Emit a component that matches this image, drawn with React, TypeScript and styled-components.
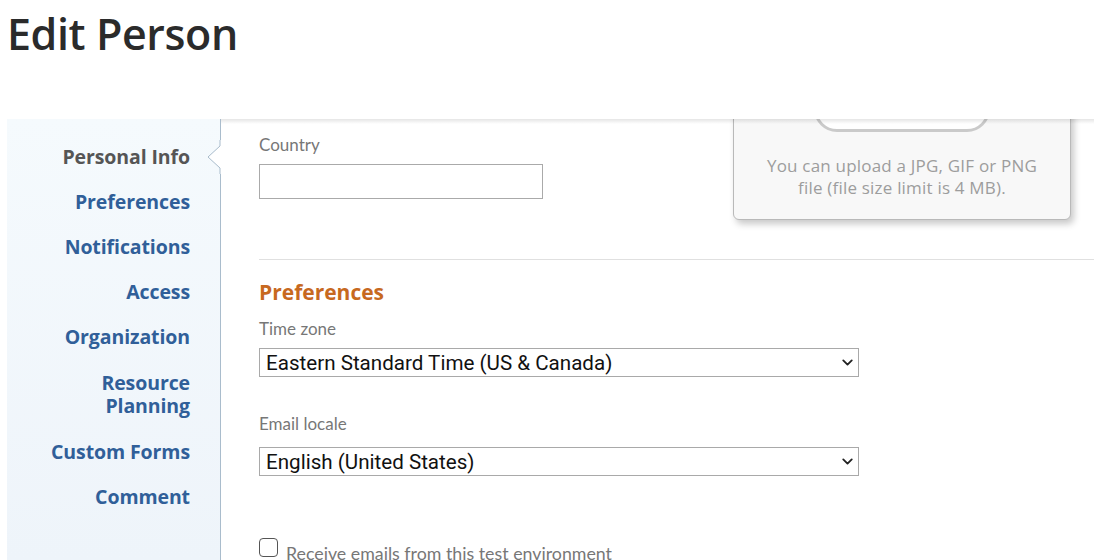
import React from "react";
import styled, { createGlobalStyle } from "styled-components";
import { ChevronDown } from "lucide-react";

const GlobalStyle = createGlobalStyle`
  html, body {
    margin: 0;
    padding: 0;
    background: #ffffff;
    overflow: hidden;
  }
  * {
    box-sizing: border-box;
  }
`;

const navItems = [
  "Personal Info",
  "Preferences",
  "Notifications",
  "Access",
  "Organization",
  "Resource Planning",
  "Custom Forms",
  "Comment",
];

const App: React.FC = () => {
  return (
    <>
      <GlobalStyle />
      <Page>
        <Header>
          <Title>Edit Person</Title>
        </Header>
        <Body>
          <Sidebar>
            <NavList>
              {navItems.map((item, index) => {
                const multiline = item === "Resource Planning";
                return (
                  <NavItem key={item} active={index === 0} multiline={multiline}>
                    {multiline ? (
                      <>
                        Resource
                        <br />
                        Planning
                      </>
                    ) : (
                      item
                    )}
                    {index === 0 && (
                      <Notch width="14" height="34" viewBox="0 0 14 34">
                        <path d="M14 0 L14 34 L13 34 L13 28 L1 17 L13 6 L13 0 Z" fill="#ffffff" />
                        <path d="M13 0 L13 6 L1 17 L13 28 L13 34" fill="none" stroke="#a9bccc" strokeWidth="1" />
                      </Notch>
                    )}
                  </NavItem>
                );
              })}
            </NavList>
          </Sidebar>

          <Content>
            <TopRow>
              <FieldColumn>
                <Label>Country</Label>
                <TextInput type="text" />
              </FieldColumn>
              <AvatarCard>
                <UploadButton type="button">Upload photo</UploadButton>
                <CardNote>
                  You can upload a JPG, GIF or PNG
                  <br />
                  file (file size limit is 4 MB).
                </CardNote>
              </AvatarCard>
            </TopRow>

            <Divider />

            <SectionTitle>Preferences</SectionTitle>

            <Label>Time zone</Label>
            <SelectWrap>
              <Select defaultValue="est">
                <option value="est">Eastern Standard Time (US &amp; Canada)</option>
              </Select>
              <SelectArrow size={17} strokeWidth={2.6} />
            </SelectWrap>

            <Label spaced>Email locale</Label>
            <SelectWrap>
              <Select defaultValue="en-us">
                <option value="en-us">English (United States)</option>
              </Select>
              <SelectArrow size={17} strokeWidth={2.6} />
            </SelectWrap>

            <CheckRow>
              <Checkbox type="checkbox" />
              <CheckLabel>Receive emails from this test environment</CheckLabel>
            </CheckRow>
          </Content>
        </Body>
      </Page>
    </>
  );
};

export default App;

const Page = styled.div`
  width: 1094px;
  height: 560px;
  display: flex;
  flex-direction: column;
  overflow: hidden;
`;

const Header = styled.header`
  height: 119px;
  padding: 5px 0 0 7px;
`;

const Title = styled.h1`
  margin: 0;
  font-family: "Open Sans", "Noto Sans", sans-serif;
  font-weight: 600;
  font-size: 43px;
  line-height: 58px;
  color: #2b2b2b;
  letter-spacing: -0.4px;
`;

const Body = styled.div`
  flex: 1;
  display: flex;
  padding-left: 7px;
  min-height: 0;
`;

const Sidebar = styled.nav`
  width: 214px;
  flex-shrink: 0;
  background: linear-gradient(180deg, #f5fafd 0%, #eef4fa 100%);
  border-right: 1px solid #a9bccc;
  position: relative;
`;

const NavList = styled.ul`
  list-style: none;
  margin: 0;
  padding: 26px 30px 0 0;
  display: flex;
  flex-direction: column;
  align-items: flex-end;
  gap: 22px;
`;

const NavItem = styled.li<{ active?: boolean; multiline?: boolean }>`
  position: relative;
  width: 100%;
  text-align: right;
  padding: ${({ multiline }) => (multiline ? "1px 0" : "0")};
  font-family: "Open Sans", "Lato", sans-serif;
  font-weight: 700;
  font-size: 19.5px;
  line-height: 23px;
  letter-spacing: -0.1px;
  color: ${({ active }) => (active ? "#555555" : "#305f99")};
  cursor: pointer;
`;

const Notch = styled.svg`
  position: absolute;
  right: -31px;
  top: 50%;
  transform: translateY(-50%);
`;

const Content = styled.main`
  position: relative;
  flex: 1;
  overflow: hidden;
  padding: 16px 0 0 38px;

  &::before {
    content: "";
    position: absolute;
    top: 0;
    left: 0;
    right: 0;
    height: 5px;
    background: linear-gradient(180deg, rgba(0, 0, 0, 0.1), rgba(0, 0, 0, 0));
    z-index: 2;
  }
`;

const TopRow = styled.div`
  display: flex;
  align-items: flex-start;
`;

const FieldColumn = styled.div`
  width: 474px;
  display: flex;
  flex-direction: column;
`;

const Label = styled.label<{ spaced?: boolean }>`
  display: block;
  font-family: "Lato", "Open Sans", sans-serif;
  font-size: 17px;
  line-height: 20px;
  color: #777777;
  margin: ${({ spaced }) => (spaced ? "37px 0 13px" : "0 0 9px")};
`;

const TextInput = styled.input`
  width: 284px;
  height: 35px;
  border: 1px solid #aaaaaa;
  border-radius: 0;
  padding: 4px 8px;
  font-size: 16px;
  outline: none;
`;

const AvatarCard = styled.div`
  width: 338px;
  margin-top: -60px;
  background: #f8f8f8;
  border: 1px solid #b9b9b9;
  border-radius: 6px;
  box-shadow: 3px 4px 7px rgba(0, 0, 0, 0.22);
  display: flex;
  flex-direction: column;
  align-items: center;
  padding: 10px 0 20px;
`;

const UploadButton = styled.button`
  width: 176px;
  height: 46px;
  border: 3px solid #cacaca;
  border-radius: 23px;
  background: #ffffff;
  color: #666666;
  font-family: "Lato", sans-serif;
  font-size: 16px;
`;

const CardNote = styled.p`
  margin: 23px 0 0;
  text-align: center;
  font-family: "Open Sans", "Lato", sans-serif;
  font-size: 17px;
  line-height: 22px;
  letter-spacing: 0.2px;
  color: #9d9d9d;
`;

const Divider = styled.hr`
  margin: 39px 0 0;
  border: none;
  border-top: 1px solid #e0e0e0;
`;

const SectionTitle = styled.h2`
  margin: 20px 0 15px;
  font-family: "Open Sans", "Lato", sans-serif;
  font-weight: 700;
  font-size: 21px;
  line-height: 24px;
  color: #c7691f;
`;

const SelectWrap = styled.div`
  position: relative;
  width: 600px;
  height: 29px;
`;

const Select = styled.select`
  appearance: none;
  width: 100%;
  height: 100%;
  border: 1px solid #a9a9a9;
  border-radius: 0;
  background: #ffffff;
  padding: 0 30px 0 6px;
  font-family: "Roboto", "Liberation Sans", sans-serif;
  font-size: 20.6px;
  color: #111111;
  outline: none;
`;

const SelectArrow = styled(ChevronDown)`
  position: absolute;
  right: 3px;
  top: 6px;
  color: #222222;
  pointer-events: none;
`;

const CheckRow = styled.div`
  display: flex;
  align-items: flex-end;
  gap: 8px;
  margin-top: 61px;
`;

const Checkbox = styled.input`
  appearance: none;
  width: 19px;
  height: 19px;
  margin: 0;
  border: 1.5px solid #555555;
  border-radius: 4px;
  background: #ffffff;
`;

const CheckLabel = styled.span`
  font-family: "Lato", "Open Sans", sans-serif;
  font-size: 17.8px;
  line-height: 20px;
  color: #777777;
  transform: translateY(6px);
`;
